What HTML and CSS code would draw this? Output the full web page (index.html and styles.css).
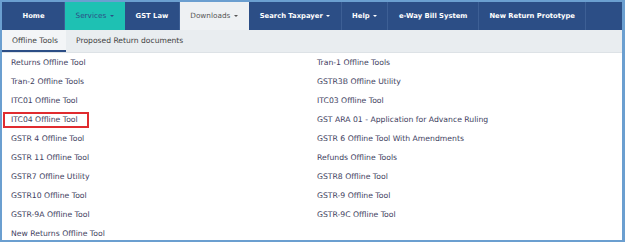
FILE: index.html
```html
<!DOCTYPE html>
<html>
<head>
    <meta charset="utf-8" />
    <title>Downloads - Offline Tools</title>
    <meta name="viewport" content="width=device-width, initial-scale=1">
    <link rel="stylesheet" href="styles.css">
</head>
<body>
    <div class="frame">
        <ul class="nav">
            <li class="nav-item nav-home">Home</li>
            <li class="nav-item active">Services <span class="caret"></span></li>
            <li class="nav-item">GST Law</li>
            <li class="nav-item open">Downloads <span class="caret"></span></li>
            <li class="nav-item">Search Taxpayer <span class="caret"></span></li>
            <li class="nav-item">Help <span class="caret"></span></li>
            <li class="nav-item">e-Way Bill System</li>
            <li class="nav-item">New Return Prototype</li>
        </ul>
        <ul class="tabs">
            <li class="tab current">Offline Tools</li>
            <li class="tab">Proposed Return documents</li>
        </ul>
        <ul class="tools">
            <li><a>Returns Offline Tool</a></li>
            <li><a>Tran-1 Offline Tools</a></li>
            <li><a>Tran-2 Offline Tools</a></li>
            <li><a>GSTR3B Offline Utility</a></li>
            <li><a>ITC01 Offline Tool</a></li>
            <li><a>ITC03 Offline Tool</a></li>
            <li><a class="marked">ITC04 Offline Tool</a></li>
            <li><a>GST ARA 01 - Application for Advance Ruling</a></li>
            <li><a>GSTR 4 Offline Tool</a></li>
            <li><a>GSTR 6 Offline Tool With Amendments</a></li>
            <li><a>GSTR 11 Offline Tool</a></li>
            <li><a>Refunds Offline Tools</a></li>
            <li><a>GSTR7 Offline Utility</a></li>
            <li><a>GSTR8 Offline Tool</a></li>
            <li><a>GSTR10 Offline Tool</a></li>
            <li><a>GSTR-9 Offline Tool</a></li>
            <li><a>GSTR-9A Offline Tool</a></li>
            <li><a>GSTR-9C Offline Tool</a></li>
            <li><a>New Returns Offline Tool</a></li>
        </ul>
    </div>
</body>
</html>
```

FILE: styles.css
```css
body,ul{
    margin: 0;
}
ul{
    padding: 0;
    list-style: none;
}
body{
    font-family: "DejaVu Sans", Verdana, sans-serif;
    background: #fff;
}
.frame{
    box-sizing: border-box;
    width: 625px;
    height: 242px;
    overflow: hidden;
    border: 2px solid #6b9fd0;
    border-right-width: 3px;
    background: #fff;
}
.nav{
    display: flex;
    height: 28px;
    padding-left: 1px;
    background: #2c4e86;
}
.nav-item{
    box-sizing: border-box;
    padding: 0 10.5px;
    height: 28px;
    line-height: 28px;
    font-size: 6.8px;
    font-weight: bold;
    color: #fff;
    text-align: center;
    white-space: nowrap;
    border-right: 1px solid #3d5f95;
}
.nav-home{
    min-width: 62px;
}
.nav-item.active{
    background: #1ec1b3;
    color: #2c4e86;
    font-weight: normal;
    font-size: 7.3px;
    border-right-color: #1ec1b3;
}
.nav-item.open{
    background: #eef1f3;
    color: #555;
    font-weight: normal;
    font-size: 7.3px;
    border-right-color: #eef1f3;
}
.caret{
    display: inline-block;
    margin-left: 1px;
    vertical-align: middle;
    border-top: 2.5px solid;
    border-left: 2.5px solid transparent;
    border-right: 2.5px solid transparent;
}
.tabs{
    display: flex;
    height: 22px;
    background: #e9edf0;
    border-bottom: 1px solid #dde2e6;
}
.tab{
    padding: 0 9px 0 10px;
    height: 22px;
    line-height: 22px;
    font-size: 7.6px;
    color: #444;
}
.tab.current{
    box-sizing: border-box;
    padding-right: 8px;
    background: #f3f5f7;
    border-bottom: 2px solid #2c4e86;
    line-height: 21px;
}
.tools{
    display: grid;
    grid-template-columns: 306px 1fr;
}
.tools li{
    height: 19px;
    line-height: 19px;
    font-size: 7.7px;
    color: #3e3e60;
}
.tools a{
    display: inline-block;
    padding-left: 9px;
}
.tools a.marked{
    margin-left: 1px;
    line-height: 12px;
    padding: 0 9px 0 6px;
    border: 2px solid #e02b2f;
    vertical-align: middle;
}
```
